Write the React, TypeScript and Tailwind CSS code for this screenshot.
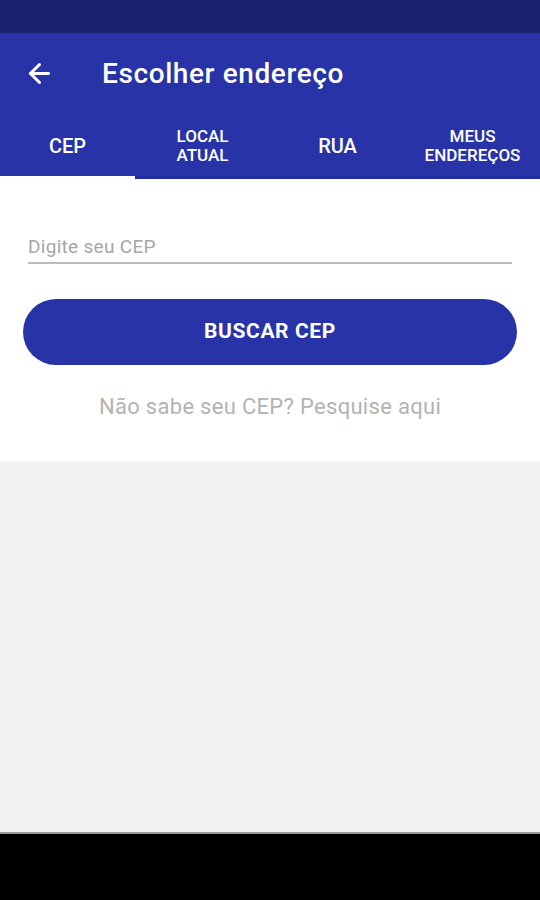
import { ArrowLeft } from 'lucide-react';

const tabs = [
  { id: 'cep', label: ['CEP'] },
  { id: 'local', label: ['LOCAL', 'ATUAL'] },
  { id: 'rua', label: ['RUA'] },
  { id: 'meus', label: ['MEUS', 'ENDEREÇOS'] },
];

export default function App() {
  const active = 'cep';

  return (
    <div className="flex h-[900px] w-[540px] flex-col overflow-hidden bg-[#f2f2f2] font-['Roboto',sans-serif]">
      {/* status bar */}
      <div className="h-[33px] shrink-0 bg-[#1b226f]" />

      {/* toolbar */}
      <header className="flex h-[78px] shrink-0 items-center bg-[#2733a7] pt-[3px] text-white">
        <div className="flex w-[80px] justify-center pr-[2px]">
          <ArrowLeft size={31} strokeWidth={2.3} />
        </div>
        <h1 className="pl-[22px] text-[28px] font-medium tracking-[0.6px]">Escolher endereço</h1>
      </header>

      {/* tabs */}
      <nav className="grid h-[68px] shrink-0 grid-cols-4 bg-[#2733a7] text-white">
        {tabs.map((tab) => (
          <div key={tab.id} className="flex flex-col">
            <div
              className={
                tab.label.length > 1
                  ? 'flex flex-1 flex-col items-center justify-center pt-[4px] text-[17px] font-medium leading-[19px]'
                  : 'flex flex-1 flex-col items-center justify-center pt-[4px] text-[20px] font-medium leading-[22px]'
              }
            >
              {tab.label.map((l) => (
                <span key={l}>{l}</span>
              ))}
            </div>
            <div className={active === tab.id ? 'h-[3px] bg-white' : 'h-[3px] bg-[#1f2ba0]'} />
          </div>
        ))}
      </nav>

      {/* content */}
      <section className="flex h-[282px] shrink-0 flex-col bg-white px-[23px]">
        <div className="mx-[5px] mt-[56px] border-b-2 border-[#bdbdbd] pb-[3px] text-[19px] leading-[24px] tracking-[0.3px] text-[#a6a6a6]">
          Digite seu CEP
        </div>
        <button className="mt-[35px] h-[66px] w-full rounded-full bg-[#2733a7] text-[21px] font-bold tracking-[0.6px] text-white">
          BUSCAR CEP
        </button>
        <p className="mt-[29px] text-center text-[22px] leading-[26px] tracking-[0.3px] text-[#b3b3b3]">Não sabe seu CEP? Pesquise aqui</p>
      </section>

      <div className="h-[2px] shrink-0 bg-gradient-to-b from-[#f8f8f8] to-[#f2f2f2]" />
      <div className="flex-1" />

      {/* nav bar */}
      <div className="h-[2px] shrink-0 bg-[#9a9a9a]" />
      <div className="h-[66px] shrink-0 bg-black" />
    </div>
  );
}
